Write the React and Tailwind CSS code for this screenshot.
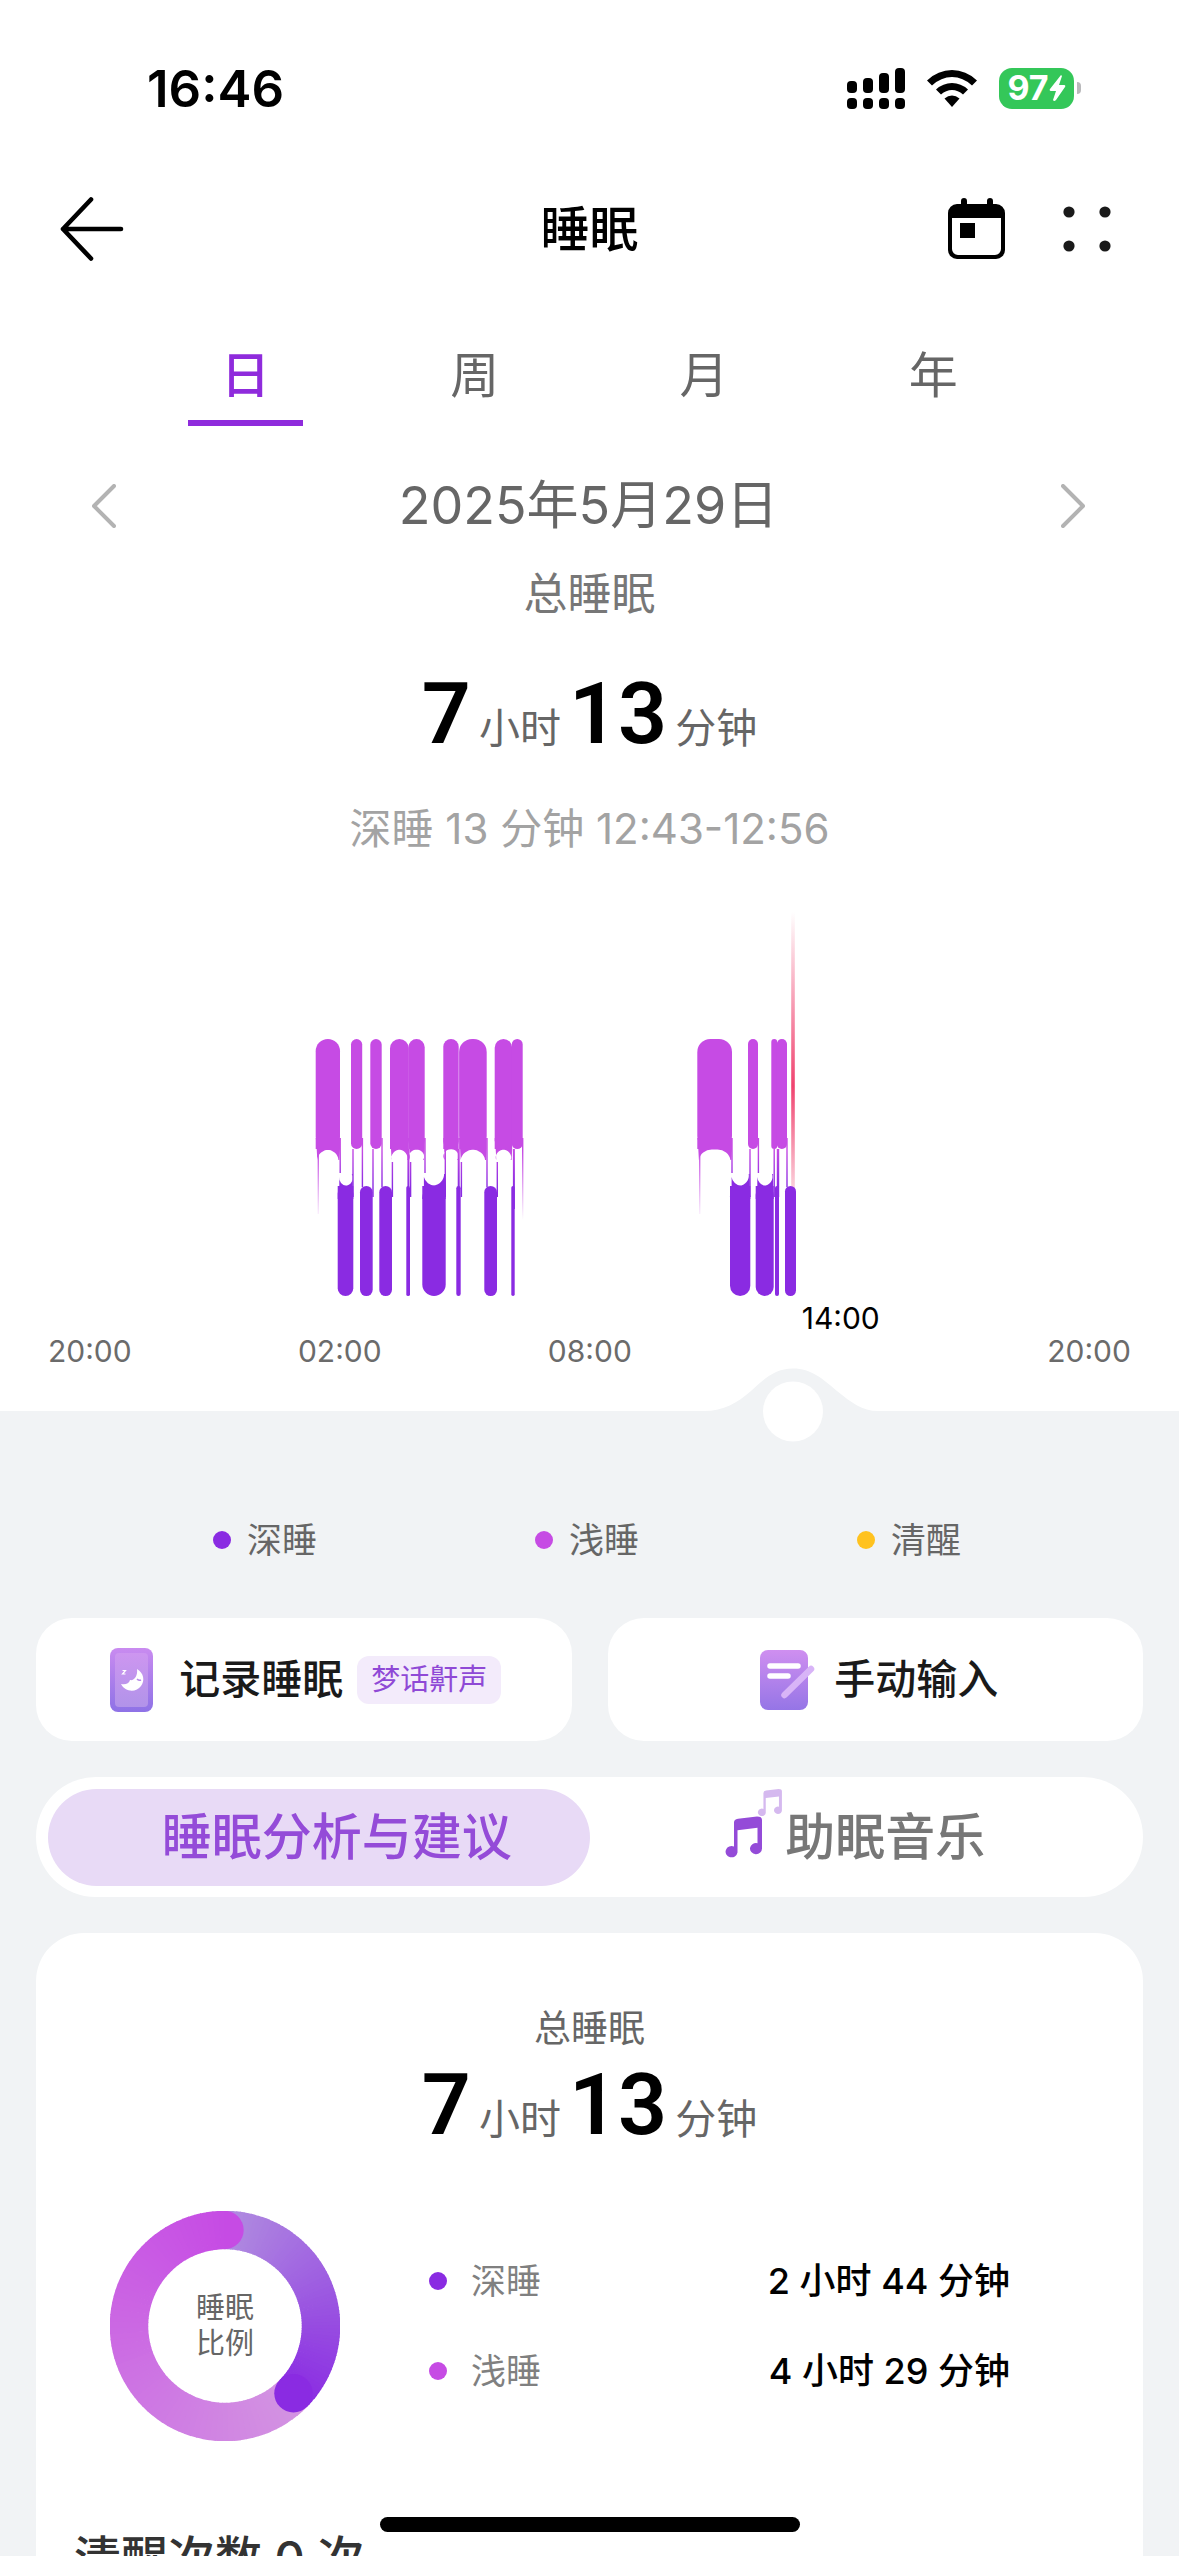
import { useState } from 'react';

const LIGHT = '#c64be4';
const DEEP = '#8a2be2';

// [left, right, arched bottom]
const lightBars = [
  [315.7, 340, true],
  [351, 362.2, false],
  [370.3, 381.7, false],
  [390, 408.8, true],
  [408.4, 424.7, true],
  [443.3, 458.7, true],
  [459.1, 486.7, true],
  [494.7, 512.2, true],
  [511.8, 522.7, false],
  [697.3, 732, true],
  [748, 758, false],
  [771.3, 777.2, false],
  [776.8, 787, false],
];

// [left, right, arched top]
const deepBars = [
  [337.7, 353.3, true],
  [360, 372.7, false],
  [379.3, 392, false],
  [406.3, 410, false],
  [422.3, 445.7, true],
  [456.3, 460.7, false],
  [484.3, 497, false],
  [511.3, 514.7, false],
  [730, 750.3, true],
  [755.7, 773.7, true],
  [775, 779, false],
  [785, 796, false],
];

// [x, top, bottom, width]
const links = [
  [340.2, 1138, 1173, 1.4],
  [353, 1149, 1197, 1.4],
  [362.4, 1138, 1187, 1.4],
  [373, 1149, 1197, 1.4],
  [382, 1138, 1187, 1.4],
  [392.4, 1162, 1197, 1.4],
  [408.4, 1149, 1187, 2],
  [410.6, 1162, 1197, 1.4],
  [425, 1138, 1173, 1.4],
  [445.3, 1149, 1197, 1.4],
  [458.7, 1149, 1187, 2],
  [461.4, 1162, 1197, 1.4],
  [487, 1138, 1187, 1.4],
  [497.3, 1162, 1197, 1.4],
  [513.9, 1149, 1209, 2],
  [732, 1138, 1173, 1.4],
  [750, 1149, 1197, 1.4],
  [758.4, 1138, 1173, 1.4],
  [774.2, 1149, 1197, 1.4],
  [778, 1149, 1197, 2.4],
  [787, 1138, 1187, 1.4],
];

const tabs = ['日', '周', '月', '年'];

const legend = [
  { label: '深睡', dot: 'bg-[#8a2be2]' },
  { label: '浅睡', dot: 'bg-[#c64be4]' },
  { label: '清醒', dot: 'bg-[#ffc21f]' },
];

const stages = [
  { label: '深睡', dot: 'bg-[#8a2be2]', value: '2 小时 44 分钟' },
  { label: '浅睡', dot: 'bg-[#c64be4]', value: '4 小时 29 分钟' },
];

const StatusBar = () => (
  <div className="flex h-[176px] items-center justify-between pr-[98px] pl-[147px]">
    <span className="text-[51px] leading-none font-semibold">16:46</span>
    <div className="flex items-center">
      <svg viewBox="0 0 58 41" className="w-[58px]">
        <rect x="0" y="13" width="10" height="12" rx="4" />
        <rect x="16" y="10" width="10" height="15" rx="4" />
        <rect x="32" y="5" width="10" height="20" rx="4" />
        <rect x="48" y="0" width="10" height="25" rx="4" />
        <rect x="0" y="30" width="10" height="11" rx="4" />
        <rect x="16" y="30" width="10" height="11" rx="4" />
        <rect x="32" y="30" width="10" height="11" rx="4" />
        <rect x="48" y="30" width="10" height="11" rx="4" />
      </svg>
      <svg viewBox="0 0 50 38" className="ml-[22px] w-[50px]">
        <path d="M0 11.5Q11 1 25 1T50 11.5L45 16.5Q36 8 25 8T5 16.5Z" />
        <path d="M9 20.5Q16 14 25 14T41 20.5L36 25.5Q31 21 25 21T14 25.5Z" />
        <path d="M17.5 29.5Q21 26.5 25 26.5T32.5 29.5L25 38Z" />
      </svg>
      <div className="ml-[22px] flex h-[41px] w-[75px] items-center justify-center rounded-[13px] bg-[#34c759] text-white">
        <span className="text-[34px] leading-none font-bold">97</span>
        <svg viewBox="0 0 17 26" className="w-[17px]" fill="currentColor">
          <path d="M12 0L1 14Q0 16 2 16H7L4 25Q5 27 7 25L16 12Q17 10 15 10H10L13 1Z" />
        </svg>
      </div>
      <div className="ml-[3px] h-3 w-1 rounded-r-full bg-[#b9b9bb]" />
    </div>
  </div>
);

const Header = () => (
  <header className="grid h-[106px] grid-cols-3 items-center px-[60px]">
    <button type="button" aria-label="返回" className="justify-self-start">
      <svg viewBox="0 0 64 64" className="w-[64px]" fill="none" stroke="currentColor" strokeWidth="4.6" strokeLinecap="round" strokeLinejoin="round">
        <path d="M61 32H3M31 2.5L3 32L31 61.5" />
      </svg>
    </button>
    <h1 className="text-center text-[49px] leading-none font-medium">睡眠</h1>
    <div className="flex items-center gap-[56px] justify-self-end">
      <button type="button" aria-label="日历">
        <svg viewBox="0 0 58 62" className="w-[58px]">
          <path d="M13 9V3a3 3 0 0 1 6 0V9zM39 9V3a3 3 0 0 1 6 0V9z" />
          <path fillRule="evenodd" d="M9 6H48a9 9 0 0 1 9 9V52a9 9 0 0 1-9 9H9a9 9 0 0 1-9-9V15a9 9 0 0 1 9-9ZM4 20V51a6 6 0 0 0 6 6H47a6 6 0 0 0 6-6V20Z" />
          <rect x="12" y="25" width="15" height="15" />
        </svg>
      </button>
      <button type="button" aria-label="更多">
        <svg viewBox="0 0 57 46" className="w-[57px]" fill="#1a1a1a">
          <circle cx="7" cy="6" r="5.6" />
          <circle cx="43" cy="6" r="5.6" />
          <circle cx="7" cy="40" r="5.6" />
          <circle cx="43" cy="40" r="5.6" />
        </svg>
      </button>
    </div>
  </header>
);

const Arrow = ({ flip }) => (
  <svg
    viewBox="0 0 24 44"
    className={flip ? 'w-6 rotate-180' : 'w-6'}
    fill="none"
    stroke="#b3b3b3"
    strokeWidth="4"
    strokeLinecap="round"
    strokeLinejoin="round"
  >
    <path d="M22 2L2 22L22 42" />
  </svg>
);

const Duration = () => (
  <p className="flex items-baseline justify-center gap-2 text-[41px] leading-none text-[#666]">
    <span className="font-[Roboto,sans-serif] text-[86px] leading-[100px] font-semibold text-black">7</span>
    <span>小时</span>
    <span className="font-[Roboto,sans-serif] text-[86px] leading-[100px] font-semibold text-black">13</span>
    <span>分钟</span>
  </p>
);

const SleepChart = () => (
  <svg viewBox="0 900 1179 400" className="mt-[45px] block w-full">
    <defs>
      <linearGradient id="link" gradientUnits="userSpaceOnUse" x1="0" y1="1149" x2="0" y2="1187">
        <stop offset="0" stopColor={LIGHT} />
        <stop offset="1" stopColor={DEEP} />
      </linearGradient>
      <linearGradient id="tail" gradientUnits="userSpaceOnUse" x1="0" y1="1150" x2="0" y2="1220">
        <stop offset="0" stopColor={LIGHT} />
        <stop offset="1" stopColor={LIGHT} stopOpacity="0" />
      </linearGradient>
      <linearGradient id="cursor" x1="0" y1="0" x2="0" y2="1">
        <stop offset="0" stopColor="#f0436f" stopOpacity="0" />
        <stop offset="0.6" stopColor="#f0436f" />
        <stop offset="1" stopColor="#f0436f" stopOpacity="0.15" />
      </linearGradient>
    </defs>
    <rect x="317.6" y="1150" width="1.4" height="64" fill="url(#tail)" />
    <rect x="522" y="1138" width="1.4" height="90" fill="url(#tail)" />
    <rect x="699" y="1150" width="1.4" height="64" fill="url(#tail)" />
    {links.map(([x, top, bottom, w]) => (
      <rect key={x} x={x - w / 2} y={top} width={w} height={bottom - top} fill="url(#link)" />
    ))}
    {lightBars.map(([l, r, arched]) => {
      const rad = Math.min((r - l) / 2, 13);
      return (
        <g key={l} fill={LIGHT}>
          <rect x={l} y="1039" width={r - l} height="110" rx={rad} />
          {arched && (
            <path
              d={`M${l} 1138H${r}V1149L${r - 0.6} 1160H${r - 1.6}A${rad} ${rad - 1} 0 0 0 ${r - 1.6 - rad} 1149.5H${l + 1.6 + rad}A${rad} ${rad - 1} 0 0 0 ${l + 1.6} 1160L${l + 1} 1149H${l}Z`}
            />
          )}
        </g>
      );
    })}
    <rect x="791.2" y="912" width="3.6" height="290" fill="url(#cursor)" />
    {deepBars.map(([l, r, arched]) => {
      const rad = Math.min((r - l) / 2, 13);
      return (
        <g key={l} fill={DEEP}>
          <rect x={l} y="1186" width={r - l} height="110" rx={rad} />
          {arched && (
            <path
              d={`M${l} 1199V1186H${l + 1.6}V1177A${rad} ${rad} 0 0 0 ${l + 1 + rad} 1185.7H${r - 1 - rad}A${rad} ${rad} 0 0 0 ${r - 1.6} 1174H${r - 0.6}V1186H${r}V1199Z`}
            />
          )}
        </g>
      );
    })}
  </svg>
);

const TimeAxis = () => (
  <div className="text-[30px] text-[#6b6b6b]">
    <p className="pl-[68%] leading-9 text-black">14:00</p>
    <div className="flex justify-between px-12 leading-[30px]">
      <span>20:00</span>
      <span>02:00</span>
      <span>08:00</span>
      <span className="w-[83px]" />
      <span>20:00</span>
    </div>
    <svg viewBox="0 0 1179 76" className="block w-full">
      <path
        d="M0 45H704C724 45 737 37 751 25C764 13 775 2.5 793 2.5S823 13 837 25C852 37 862 45 878 45H1179V76H0Z"
        fill="#f1f3f5"
      />
      <circle cx="793" cy="45.5" r="30" fill="#fff" />
    </svg>
  </div>
);

const PhoneIcon = () => (
  <svg viewBox="0 0 44 66" className="w-[44px]">
    <defs>
      <linearGradient id="phone" x1="0" y1="0" x2="0" y2="1">
        <stop offset="0" stopColor="#c98bf0" />
        <stop offset="1" stopColor="#8e72e6" />
      </linearGradient>
      <linearGradient id="screen" x1="0" y1="0" x2="0" y2="1">
        <stop offset="0" stopColor="#cd96f0" />
        <stop offset="1" stopColor="#b193e9" />
      </linearGradient>
    </defs>
    <rect y="1" width="43" height="64" rx="8" fill="url(#phone)" />
    <rect x="5" y="6" width="33" height="54" rx="4" fill="url(#screen)" />
    <path d="M27 22C34 26 35 34 31 39C26 46 15 45 11 37C15 38 19 37 20 33C24 34 28 29 27 22Z" fill="#fff" />
    <path d="M27 32Q29 34 31 33" stroke="#b78ae8" strokeWidth="1.5" fill="none" />
    <path d="M12.5 23.5H15.5L12.5 27H15.5" stroke="#fff" strokeWidth="1.2" fill="none" />
  </svg>
);

const NoteIcon = () => (
  <svg viewBox="0 0 56 62" className="w-[56px]">
    <defs>
      <linearGradient id="note" x1="0" y1="0" x2="0" y2="1">
        <stop offset="0" stopColor="#cf8ff0" />
        <stop offset="1" stopColor="#9575e6" />
      </linearGradient>
    </defs>
    <rect y="1" width="48" height="60" rx="8" fill="url(#note)" />
    <path d="M10 17H38M10 27H28" stroke="#fff" strokeWidth="5.5" strokeLinecap="round" />
    <path d="M24.5 46L51 20" stroke="#d8b4f7" strokeWidth="6.5" strokeLinecap="round" />
  </svg>
);

const MusicIcon = () => (
  <svg viewBox="0 0 58 69" className="w-[58px]">
    <defs>
      <path
        id="notes"
        d="M9 7Q9 3 13 2.5L32 0Q37 0 37 4V37A6 6.5 0 1 1 32.5 31V13L12.5 16V42A6 6.5 0 1 1 9 35Z"
      />
    </defs>
    <use href="#notes" fill="#d5b9ef" transform="translate(32.5 0) scale(0.66 0.57)" />
    <use href="#notes" fill="#944bd8" transform="translate(0 27.5) scale(1 0.86)" />
  </svg>
);

const point = (deg, r = 96) => {
  const a = ((deg - 90) * Math.PI) / 180;
  return [115 + r * Math.cos(a), 115 + r * Math.sin(a)];
};

const mix = (a, b, t) => `rgb(${a.map((v, i) => Math.round(v + (b[i] - v) * t)).join(',')})`;

const GradientArc = ({ from, to, start, end, steps = 72 }) => (
  <g fill="none" strokeWidth="38.5">
    {Array.from({ length: steps }, (_, i) => {
      const a = from + ((to - from) * i) / steps;
      const b = Math.min(from + ((to - from) * (i + 1)) / steps + 0.5, to);
      const [x1, y1] = point(a);
      const [x2, y2] = point(b);
      return <path key={i} d={`M${x1} ${y1}A96 96 0 0 1 ${x2} ${y2}`} stroke={mix(start, end, i / steps)} />;
    })}
  </g>
);

const Donut = () => {
  const split = 134.5;
  const [cx, cy] = point(split);
  return (
    <div className="relative w-[230px] shrink-0">
      <svg viewBox="0 0 230 230" className="block w-full">
        <GradientArc from={split} to={360} start={[211, 148, 226]} end={[198, 75, 228]} />
        <GradientArc from={0} to={split} start={[176, 140, 224]} end={[138, 43, 226]} />
        <circle cx={cx} cy={cy} r="19.2" fill={DEEP} />
        <path d="M114.5 -0.2A19.2 19.2 0 0 1 114.5 38.2Z" fill={LIGHT} />
      </svg>
      <div className="absolute inset-0 flex flex-col items-center justify-center text-[29px] leading-9 text-[#666]">
        <span>睡眠</span>
        <span>比例</span>
      </div>
    </div>
  );
};

export default function App() {
  const [tab, setTab] = useState('日');

  return (
    <div className="relative h-screen overflow-hidden bg-[#f1f3f5] font-['Inter','Noto_Sans_CJK_SC',sans-serif] text-black">
      <section className="bg-white">
        <StatusBar />
        <Header />

        <nav className="grid grid-cols-4 px-[131px] pt-16 text-[49px] text-[#666]">
          {tabs.map((name) => (
            <button
              key={name}
              type="button"
              onClick={() => setTab(name)}
              className={`flex flex-col items-center gap-3.5 leading-[60px] ${name === tab ? 'font-medium text-[#8f2bdc]' : ''}`}
            >
              {name}
              <span className={`h-1.5 w-[115px] ${name === tab ? 'bg-[#8f2bdc]' : ''}`} />
            </button>
          ))}
        </nav>

        <div className="mt-11 flex h-[72px] items-center justify-between pr-[94px] pl-[92px]">
          <button type="button" aria-label="前一天">
            <Arrow />
          </button>
          <p className="text-[52px] leading-none text-[#666]">2025年5月29日</p>
          <button type="button" aria-label="后一天">
            <Arrow flip />
          </button>
        </div>

        <p className="mt-[26px] text-center text-[44px] leading-[52px] text-[#777]">总睡眠</p>
        <div className="mt-11">
          <Duration />
        </div>
        <p className="mt-[39px] text-center text-[42px] leading-[52px] text-[#a3a3a3]">深睡 13 分钟 12:43-12:56</p>

        <SleepChart />
        <TimeAxis />
      </section>

      <ul className="mt-[78px] grid grid-cols-3 pl-[213px] text-[35px] leading-10 text-[#666]">
        {legend.map(({ label, dot }) => (
          <li key={label} className="flex items-center gap-4">
            <span className={`size-[18px] rounded-full ${dot}`} />
            {label}
          </li>
        ))}
      </ul>

      <main className="mt-[58px] flex flex-col gap-9 px-9">
        <div className="grid grid-cols-2 gap-9 text-[41px] font-medium text-[#1a1a1a]">
          <button type="button" className="flex h-[123px] items-center justify-center rounded-[36px] bg-white pl-1">
            <PhoneIcon />
            <span className="ml-[25px]">记录睡眠</span>
            <span className="ml-3.5 rounded-[12px] bg-[#f3ebfb] px-3.5 text-[29px] leading-[48px] font-normal text-[#8f49d6]">
              梦话鼾声
            </span>
          </button>
          <button type="button" className="flex h-[123px] items-center justify-center rounded-[36px] bg-white pl-2">
            <NoteIcon />
            <span className="ml-[18px]">手动输入</span>
          </button>
        </div>

        <div className="grid h-[120px] grid-cols-2 rounded-full bg-white p-3 text-[50px] font-medium">
          <button type="button" className="rounded-full bg-[#e8daf6] pl-9 text-[#944bd8]">
            睡眠分析与建议
          </button>
          <button type="button" className="flex items-center justify-center gap-0.5 pr-2.5 text-[#777]">
            <span className="pb-7">
              <MusicIcon />
            </span>
            助眠音乐
          </button>
        </div>

        <section className="rounded-t-[48px] bg-white px-[38px] pt-[72px]">
          <h2 className="text-center text-[37px] leading-[48px] text-[#666]">总睡眠</h2>
          <div className="mt-0.5">
            <Duration />
          </div>
          <div className="mt-14 flex items-center pr-[95px] pl-9">
            <Donut />
            <dl className="ml-[89px] flex flex-1 flex-col gap-[50px] text-[35px] leading-10">
              {stages.map(({ label, dot, value }) => (
                <div key={label} className="flex items-center">
                  <span className={`size-[18px] rounded-full ${dot}`} />
                  <dt className="ml-6 flex-1 text-[#808080]">{label}</dt>
                  <dd className="text-[36px] font-medium">{value}</dd>
                </div>
              ))}
            </dl>
          </div>
          <h2 className="mt-[85px] text-[47px] leading-[64px] font-medium text-[#333]">清醒次数 0 次</h2>
        </section>
      </main>

      <div className="absolute bottom-6 left-1/2 h-[15px] w-[420px] -translate-x-1/2 rounded-full bg-black" />
    </div>
  );
}
